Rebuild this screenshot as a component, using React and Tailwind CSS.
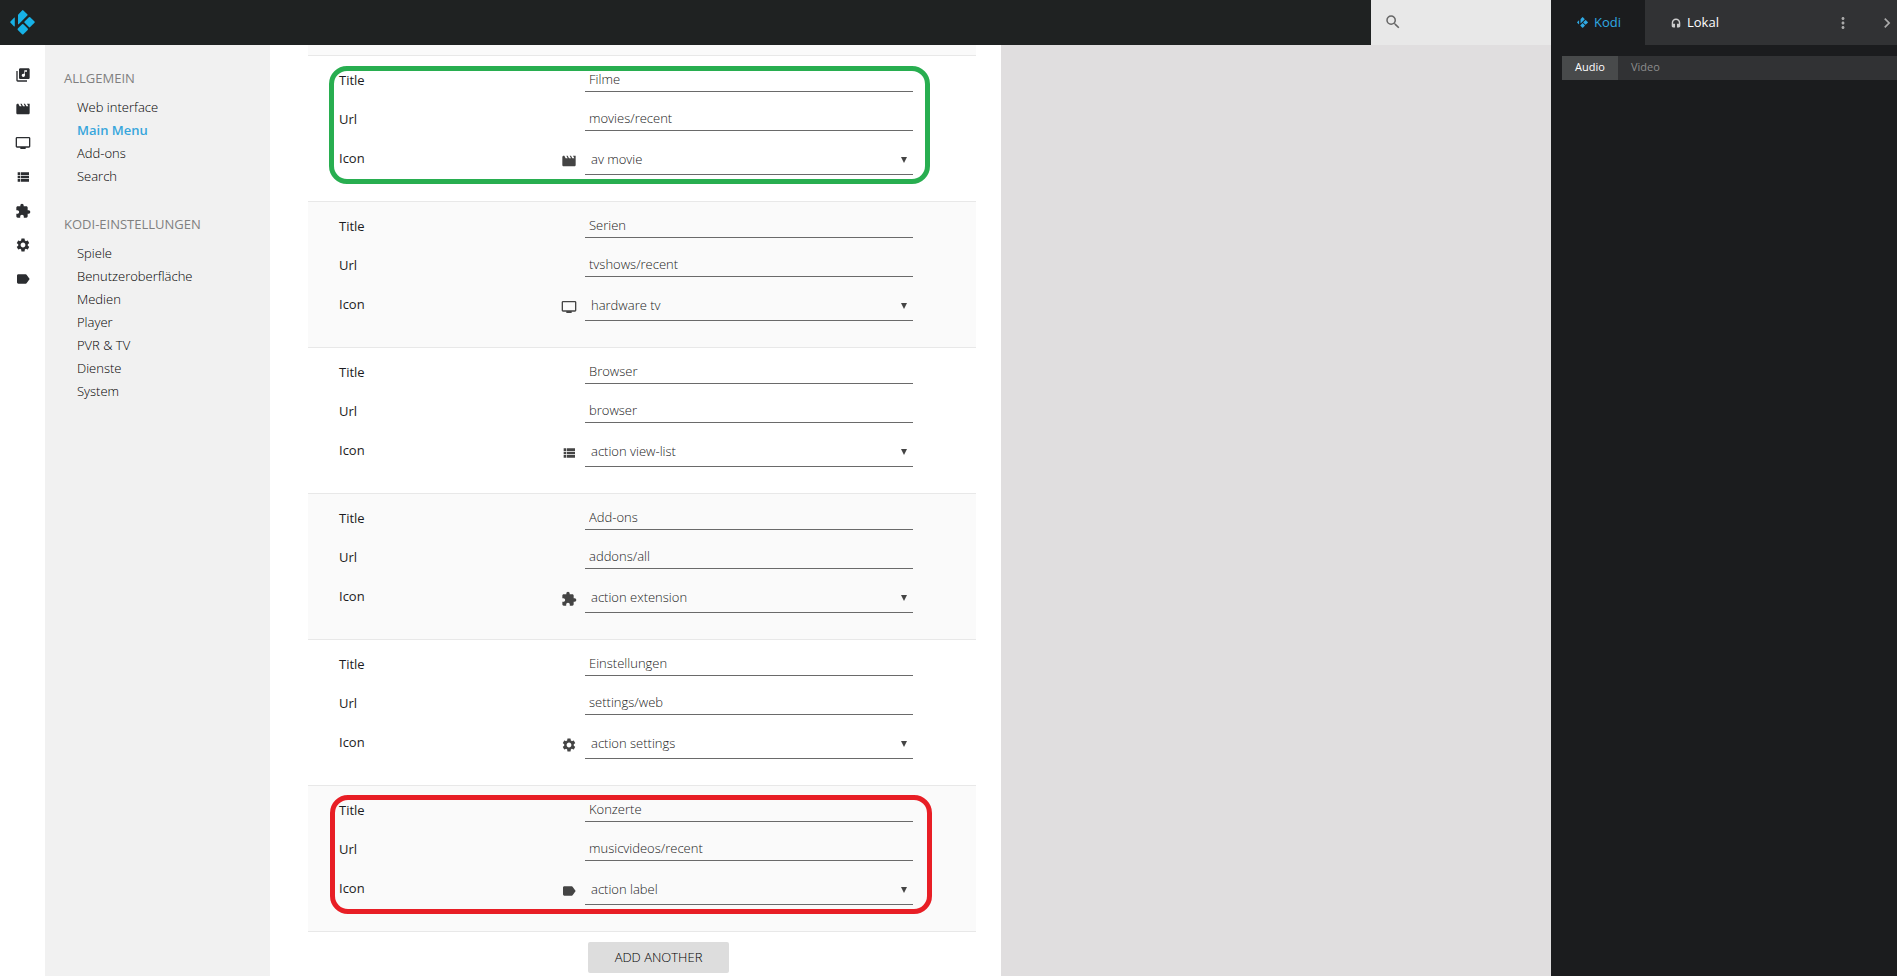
import {
  MdMovie, MdTv, MdExtension, MdSettings, MdLabel, MdSearch, MdMoreVert, MdChevronRight, MdLibraryMusic,
} from "react-icons/md";

function ViewList({ className }) {
  return (
    <svg viewBox="0 0 24 24" fill="currentColor" className={className} aria-hidden="true">
      <path d="M4 14h4v-4H4v4zm0 5h4v-4H4v4zM4 9h4V5H4v4zm5 5h12v-4H9v4zm0 5h12v-4H9v4zM9 5v4h12V5H9z" />
    </svg>
  );
}

function Headset({ className }) {
  return (
    <svg viewBox="2 0 20 21" fill="currentColor" className={className} aria-hidden="true">
      <path d="M12 1c-4.970 0-9 4.030-9 9v7c0 1.660 1.340 3 3 3h4v-8H6v-2c0-3.300 2.700-6 6-6s6 2.700 6 6v2h-4v8h4c1.660 0 3-1.340 3-3v-7c0-4.970-4.030-9-9-9z" />
    </svg>
  );
}

function KodiLogo({ className }) {
  return (
    <svg viewBox="0 0 25 25" fill="currentColor" className={className} aria-hidden="true">
      <path d="M12.1.4a1 1 0 0 1 1.3 0l3.9 3.9a1 1 0 0 1 0 1.3l-8.6 8.6a.4.4 0 0 1-.7-.3V5.200a1 1 0 0 1 .3-.8z" />
      <path d="M18.900 7.200a1 1 0 0 1 1.300 0l4.300 4.300a1 1 0 0 1 0 1.300l-4.300 4.300a1 1 0 0 1-1.300 0l-4.300-4.300a1 1 0 0 1 0-1.300z" />
      <path d="M12.100 14.300a1 1 0 0 1 1.300 0l4.300 4.300a1 1 0 0 1 0 1.300l-4.300 4.300a1 1 0 0 1-1.300 0l-4.300-4.300a1 1 0 0 1 0-1.300z" />
      <path d="M4.800 7.900v8.200c0 .4-.4.500-.7.300L.5 12.800a1 1 0 0 1 0-1.300l3.600-3.800c.3-.3.700-.200.700.2z" />
    </svg>
  );
}

const mainNav = [
  ["Music", MdLibraryMusic],
  ["Filme", MdMovie],
  ["Serien", MdTv],
  ["Browser", ViewList],
  ["Add-ons", MdExtension],
  ["Einstellungen", MdSettings],
  ["Konzerte", MdLabel],
];

const sections = [
  { title: "ALLGEMEIN", items: ["Web interface", "Main Menu", "Add-ons", "Search"] },
  {
    title: "KODI-EINSTELLUNGEN",
    items: ["Spiele", "Benutzeroberfläche", "Medien", "Player", "PVR & TV", "Dienste", "System"],
  },
];

const entries = [
  { title: "Filme", url: "movies/recent", icon: "av movie", Icon: MdMovie, mark: "left-[21px] top-[10px] h-[118px] w-[601px] border-[#28ae50]" },
  { title: "Serien", url: "tvshows/recent", icon: "hardware tv", Icon: MdTv },
  { title: "Browser", url: "browser", icon: "action view-list", Icon: ViewList },
  { title: "Add-ons", url: "addons/all", icon: "action extension", Icon: MdExtension },
  { title: "Einstellungen", url: "settings/web", icon: "action settings", Icon: MdSettings },
  { title: "Konzerte", url: "musicvideos/recent", icon: "action label", Icon: MdLabel, mark: "left-[22px] top-[9px] h-[119px] w-[602px] border-[#e81e25]" },
];

const labelClass = "w-[246px] shrink-0 leading-5 font-medium text-[#1c1c22]";
const fieldClass = "block w-full rounded-none border-b border-[#6a6a6a] bg-transparent font-light text-[#1a1a1a] outline-none";

function MenuEntry({ entry, index }) {
  const { title, url, icon, Icon, mark } = entry;
  const id = `entry-${index}`;
  return (
    <li className="relative border-b border-[#e8e8e8] pt-[14px] pr-[63px] pb-[26px] pl-[31px] even:bg-[#fafafa]">
      <div className="flex h-[39px] items-start">
        <label htmlFor={`${id}-title`} className={labelClass}>Title</label>
        <input id={`${id}-title`} defaultValue={title} className={`${fieldClass} h-[22px] px-1 pb-[3px]`} />
      </div>
      <div className="flex h-[39px] items-start">
        <label htmlFor={`${id}-url`} className={labelClass}>Url</label>
        <input id={`${id}-url`} defaultValue={url} className={`${fieldClass} h-[22px] px-1 pb-[3px]`} />
      </div>
      <div className="flex items-start">
        <label htmlFor={`${id}-icon`} className="flex w-[246px] shrink-0 justify-between pr-2 leading-5 font-medium text-[#1c1c22]">
          Icon
          <Icon className="mt-[5px] size-4 text-[#444]" />
        </label>
        <div className="relative flex-1">
          <select id={`${id}-icon`} defaultValue={icon} className={`${fieldClass} h-[27px] appearance-none px-1.5 pb-0.5`}>
            {entries.map((e) => (
              <option key={e.icon}>{e.icon}</option>
            ))}
          </select>
          <svg viewBox="0 0 6 6" className="pointer-events-none absolute top-[9px] right-1.5 size-1.5 text-[#444]" fill="currentColor" aria-hidden="true">
            <path d="M0 0h6L3 6z" />
          </svg>
        </div>
      </div>
      {mark && <div className={`pointer-events-none absolute rounded-[18px] border-[5px] ${mark}`} />}
    </li>
  );
}

export default function App() {
  return (
    <div className="flex h-screen overflow-hidden bg-[#e0dedf] font-['Open_Sans',sans-serif] text-[13px] text-[#1c1c22]">
      <div className="flex min-w-0 flex-1 flex-col">
        <header className="flex h-[45px] shrink-0 bg-[#1f2222]">
          <a href="#" aria-label="Kodi" className="flex w-[45px] items-center justify-center text-[#17b2e7]">
            <KodiLogo className="size-[25px]" />
          </a>
          <div className="flex-1" />
          <label className="flex w-[180px] items-center bg-[#e8e8e8] pl-[13px] text-[#666]">
            <MdSearch className="mb-px size-[18px] shrink-0" />
            <input type="search" aria-label="Search" className="h-full min-w-0 flex-1 bg-transparent px-2 outline-none" />
          </label>
        </header>

        <div className="flex min-h-0 flex-1">
          <nav className="flex w-[45px] shrink-0 flex-col items-center bg-white pt-[13px] text-[#2b2d30]">
            {mainNav.map(([name, Icon]) => (
              <a key={name} href="#" aria-label={name} className="flex h-[34px] items-center">
                <Icon className="size-4" />
              </a>
            ))}
          </nav>

          <aside className="w-[225px] shrink-0 bg-[#f1f1f1] pt-5 pl-[19px]">
            {sections.map((section) => (
              <section key={section.title} className="mb-[23px]">
                <h2 className="mb-[5px] leading-[26px] text-[#808080]">{section.title}</h2>
                <ul>
                  {section.items.map((item) => (
                    <li key={item} className="h-[23px] pl-[13px] leading-[23px]">
                      <a href="#" className={item === "Main Menu" ? "font-semibold text-[#37a6dc]" : "font-light text-black"}>{item}</a>
                    </li>
                  ))}
                </ul>
              </section>
            ))}
          </aside>

          <main className="w-[731px] shrink-0 overflow-hidden bg-white pr-[25px] pl-[38px]">
            <div className="h-[11px] border-b border-[#e8e8e8] bg-[#fafafa]" />
            <ul>
              {entries.map((entry, index) => (
                <MenuEntry key={entry.title} entry={entry} index={index} />
              ))}
            </ul>
            <button type="button" className="mt-[10px] ml-[280px] h-[31px] w-[141px] rounded-[2px] bg-[#ddd] font-light text-black">
              ADD ANOTHER
            </button>
          </main>
        </div>
      </div>

      <aside className="w-[346px] shrink-0 bg-[#1b1c1e]">
        <div className="flex h-[45px] bg-[#313234]">
          <button type="button" className="flex w-[94px] items-center gap-1.5 bg-[#1b1c1e] pl-[26px] text-[#2fa9e4]">
            <KodiLogo className="size-[11px]" />
            Kodi
          </button>
          <button type="button" className="flex items-center gap-1.5 pl-[26px] text-white">
            <Headset className="size-[10px] text-[#ccc]" />
            Lokal
          </button>
          <div className="flex-1" />
          <button type="button" aria-label="More" className="flex w-9 items-center justify-center text-[#aaa]">
            <MdMoreVert className="size-[18px]" />
          </button>
          <button type="button" aria-label="Collapse" className="ml-4 flex w-5 items-center justify-center text-[#aaa]">
            <MdChevronRight className="size-5" />
          </button>
        </div>
        <div className="mt-[11px] ml-[11px] flex h-6 bg-[#313234] text-[11px]">
          <button type="button" className="w-14 bg-[#484a4b] pb-0.5 font-medium text-white">Audio</button>
          <button type="button" className="px-[13px] pb-0.5 text-[#8d8d8d]">Video</button>
        </div>
      </aside>
    </div>
  );
}
